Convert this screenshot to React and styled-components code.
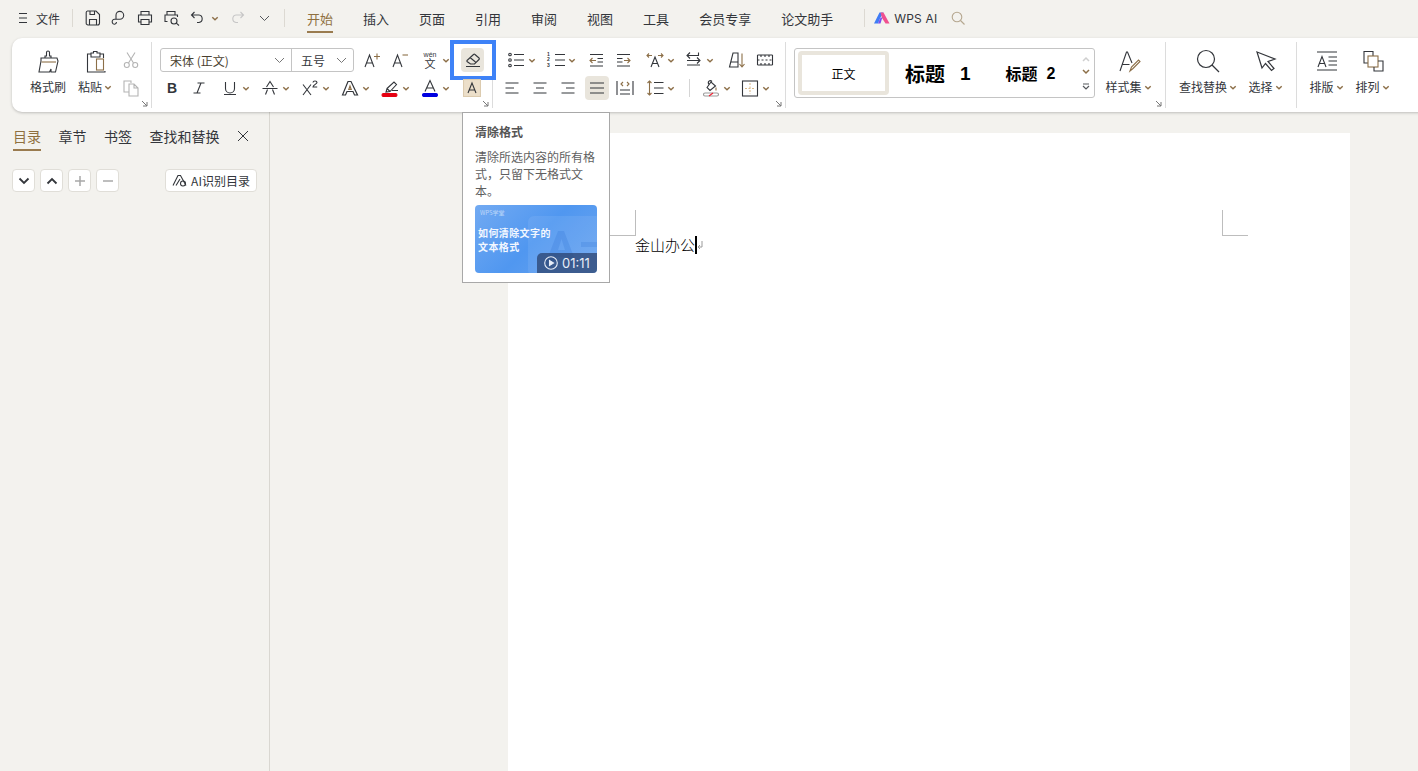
import React from 'react';
import styled, { createGlobalStyle } from 'styled-components';

const D = '#33363b';
const B = '#8c6f48';
const G = '#b4b4b4';
const CJK = '"Noto Sans CJK SC", "Liberation Sans", sans-serif';

const Global = createGlobalStyle`
  html, body { margin: 0; padding: 0; height: 771px; overflow: hidden; background: #f3f2ee; }
  body { font-family: "Inter", "Noto Sans CJK SC", "Liberation Sans", sans-serif; color: #33363b; }
  #root { height: 771px; }
`;

const App_ = styled.div`height: 771px; display: flex; flex-direction: column; position: relative; overflow: hidden;`;

const TopBar = styled.header`height: 36px; padding-bottom: 2px; flex: none; display: flex; align-items: center; padding-left: 18px;`;
const TopLabel = styled.span`font: 12px ${CJK}; margin-left: ${p => p.$ml || 0}px;`;
const TopSep = styled.i`width: 1px; height: 18px; background: #dcd9d2; margin-left: ${p => p.$ml || 0}px; flex: none;`;
const TopIcon = styled.span`display: flex; margin-left: ${p => p.$ml || 0}px; flex: none;`;
const Tabs = styled.nav`display: flex; gap: 30px; margin-left: 22px; align-self: flex-start;`;
const Tab = styled.a`
  height: 22px; margin-top: 9px; font: 13px/20px ${CJK};
  color: ${p => (p.$active ? '#8f7040' : '#33363b')};
  border-bottom: 2px solid ${p => (p.$active ? '#9a7b4f' : 'transparent')};
`;
const AiLabel = styled.span`font: 12px "Inter", sans-serif; letter-spacing: .2px; color: #33363b; margin-left: 4px;`;

const Ribbon = styled.section`
  height: 74px; flex: none; margin-left: 12px; margin-right: -20px; background: #fff;
  border-radius: 10px; box-shadow: 0 1px 3px rgba(0,0,0,.22); display: flex; position: relative; z-index: 1;
`;
const Group = styled.div`
  width: ${p => p.$w}px; flex: ${p => (p.$w ? 'none' : 1)}; box-sizing: border-box; margin: 4px 0; padding: 6px 0 0 ${p => p.$pl}px;
  border-right: ${p => (p.$last ? '0' : '1px solid #dcdcdc')}; display: flex; position: relative;
`;
const Launcher = styled.span`position: absolute; right: 3px; bottom: 1px; display: flex;`;
const Big = styled.div`display: flex; flex-direction: column; align-items: center; width: ${p => p.$w}px; margin-left: ${p => p.$ml || 0}px; flex: none;`;
const BigIcon = styled.div`height: 26px; display: flex; align-items: center; justify-content: center;`;
const BigLabel = styled.div`margin-top: 5px; font: 12px/16px ${CJK}; color: #33363b; display: flex; align-items: center; gap: 2px; white-space: nowrap;`;
const Stack = styled.div`display: flex; flex-direction: column; gap: 4px; margin-left: ${p => p.$ml || 0}px;`;
const Row = styled.div`display: flex; align-items: center; height: 24px; margin-left: ${p => p.$ml || 0}px;`;
const Tool = styled.span`
  display: flex; align-items: center; justify-content: center; gap: 3px; flex: none; height: 24px;
  width: ${p => (p.$w ? p.$w + 'px' : 'auto')}; margin-left: ${p => p.$ml || 0}px; border-radius: 4px;
  background: ${p => (p.$on ? '#e9e5dc' : 'transparent')}; position: relative;
`;
const Highlight = styled.span`position: absolute; left: -11px; top: -8px; width: 38px; height: 32px; border: 4px solid #3e82f7; pointer-events: none;`;
const RowSep = styled.i`width: 1px; height: 18px; background: #d5d5d5; margin-left: ${p => p.$ml}px; flex: none;`;
const Combo = styled.div`width: 194px; height: 24px; box-sizing: border-box; border: 1px solid #c4c4c4; border-radius: 3px; display: flex; flex: none;`;
const ComboCell = styled.div`
  width: ${p => p.$w}px; box-sizing: border-box; padding: 0 6px 0 ${p => p.$pl}px; display: flex; align-items: center; justify-content: space-between;
  font: 12px ${CJK}; color: ${p => p.$c || '#33363b'}; border-left: ${p => (p.$sep ? '1px solid #c4c4c4' : 0)}; flex: none;
`;
const Bold = styled.span`font: bold 14px "Liberation Sans", sans-serif; color: #33363b; width: 14px; text-align: center;`;
const Pinyin = styled.span`width: 18px; display: flex; flex-direction: column; align-items: center; color: #33363b;`;
const PinyinTop = styled.span`font: 7px/7px "Liberation Sans", sans-serif; height: 7px;`;
const PinyinBottom = styled.span`font: 11px/11px ${CJK}; height: 11px;`;
const ListNums = styled.span`width: 7px; display: flex; flex-direction: column; font: bold 5px/5.5px "Liberation Sans", sans-serif; color: #33363b;`;
const NumList = styled.span`display: flex; align-items: center; width: 18px; gap: 1px;`;

const Gallery = styled.div`width: 301px; height: 50px; box-sizing: border-box; border: 1px solid #c4c4c4; border-radius: 3px; display: flex; align-items: center; padding-left: 3px; flex: none;`;
const NormalStyle = styled.div`width: 91px; height: 44px; box-sizing: border-box; border: 4px solid #e9e5dc; border-radius: 4px; display: flex; align-items: center; justify-content: center; font: 12px ${CJK}; color: #000; flex: none;`;
const Heading = styled.div`font: bold ${p => p.$s}px ${CJK}; color: #000; margin-left: ${p => p.$ml}px; display: flex; align-items: center; flex: none;`;
const HNum = styled.span`font: bold ${p => p.$s}px "Liberation Sans", sans-serif; margin: 1px 0 0 ${p => p.$ml}px;`;
const GalleryScroll = styled.div`margin-left: auto; width: 16px; height: 100%; display: flex; flex-direction: column; align-items: center; justify-content: space-around; padding: 3px 0; box-sizing: border-box;`;

const Body = styled.main`flex: 1; display: flex; min-height: 0;`;
const Side = styled.aside`width: 270px; box-sizing: border-box; border-right: 1px solid #d9d7d1; padding: 15px 0 0 13px; flex: none;`;
const SideTabs = styled.div`display: flex; gap: 17.5px; align-items: flex-start; height: 23px;`;
const SideTab = styled.span`
  font: 14px/18px ${CJK}; white-space: nowrap; padding-bottom: 4px; color: ${p => (p.$active ? '#8f7040' : '#33363b')};
  border-bottom: ${p => (p.$active ? '2px solid #9a7b4f' : '0')};
`;
const SideClose = styled.span`display: flex; margin: 2px 0 0 -1px;`;
const SideTools = styled.div`display: flex; margin: 19px 0 0 -1px; gap: 5px; align-items: center; width: 245px;`;
const SquareBtn = styled.button`
  width: 23px; height: 23px; padding: 0; background: #fff; border: 1px solid #e0ded8; border-radius: 4px; display: flex; align-items: center; justify-content: center;
`;
const AiBtn = styled.button`
  margin-left: auto; height: 23px; width: 92px; padding: 0; background: #fff; border: 1px solid #e0ded8; border-radius: 4px; display: flex; align-items: center; justify-content: center; gap: 4px;
  font: 12px ${CJK}; color: #33363b; white-space: nowrap;
`;
const DocArea = styled.div`flex: 1; padding: 21px 0 0 238px; overflow: hidden;`;
const Page = styled.article`width: 842px; height: 700px; background: #fff; position: relative; box-sizing: border-box; padding: 102px 0 0 127px;`;
const Crop = styled.i`
  position: absolute; top: 77px; width: 26px; height: 26px; box-sizing: border-box; border-bottom: 1px solid #bdbdbd;
  ${p => (p.$right ? 'left: 714px; border-left: 1px solid #bdbdbd;' : 'left: 102px; border-right: 1px solid #bdbdbd;')}
`;
const Line = styled.p`margin: 0; display: flex; align-items: center; height: 20px; font: 300 15px/20px ${CJK}; color: #000;`;
const Caret = styled.i`width: 2px; height: 18px; background: #000;`;
const ParaMark = styled.span`display: flex;`;

const Tip = styled.aside`
  position: absolute; left: 462px; top: 112px; width: 148px; height: 171px; box-sizing: border-box; background: #fff; border: 1px solid #a8a8a8; padding: 10px 12px 0; z-index: 2;
`;
const TipTitle = styled.div`font: bold 12px/17px ${CJK}; color: #555;`;
const TipText = styled.div`margin-top: 8px; font: 12px/17px ${CJK}; color: #5f5f5f;`;
const Thumb = styled.div`
  margin-top: 6px; width: 122px; height: 68px; border-radius: 4px; position: relative; overflow: hidden;
  background: linear-gradient(135deg, #72aaf2 0%, #5097f0 50%, #6ba5ef 100%); color: #fff;
`;
const ThumbBrand = styled.div`position: absolute; left: 5px; top: 4px; font: 6px/8px ${CJK}; color: rgba(255,255,255,.55);`;
const ThumbTitle = styled.div`position: absolute; left: 3px; top: 21px; font: bold 10px/13.5px ${CJK}; letter-spacing: .4px; color: #f2f7ff; white-space: nowrap;`;
const ThumbArt = styled.svg`position: absolute; left: 0; top: 0;`;
const Pill = styled.div`
  position: absolute; right: 0; bottom: 0; width: 60px; height: 20px; background: rgba(40,62,105,.72); border-radius: 5px 0 0 0; display: flex; align-items: center; justify-content: center; gap: 4px;
  font: 13px "Inter", sans-serif; color: #e8eef8;
`;

const SvgBase = styled.svg`fill: none; stroke: ${p => p.$c || D}; stroke-width: ${p => p.$sw || 1.1}; flex: none; display: block;`;
const I = ({ s = 18, w, h, c, sw, children }) => (
  <SvgBase width={w || s} height={h || s} viewBox={`0 0 ${w || s} ${h || s}`} $c={c} $sw={sw}>{children}</SvgBase>
);
const Car = () => <I w={8} h={5} c={B} sw={1.4}><path d="M1.300 1.200L4 3.800l2.700-2.600" /></I>;
const Chev = ({ c = '#777' }) => <I w={11} h={7} c={c} sw={1}><path d="M1 1l4.500 4.500L10 1" /></I>;
const Launch = () => <I s={7} c="#777" sw={1}><path d="M1 1l5 5M6 2v4H2" /></I>;

const App = () => (
  <App_>
    <Global />
    <TopBar>
      <I w={10} h={12}><path d="M1 1.500h8M1 6h8M1 10.500h8" /></I>
      <TopLabel $ml={8}>文件</TopLabel>
      <TopSep $ml={12} />
      <TopIcon $ml={12}><I s={16}><path d="M2.500 1H11l3.500 3.500V13a2 2 0 0 1-2 2h-9.500a1.800 1.800 0 0 1-1.800-1.800V2.500A1.500 1.500 0 0 1 2.500 1zM5 1v3.500h4.500V1M4.500 15V9.500h7V15" /></I></TopIcon>
      <TopIcon $ml={9}><I s={16}><path d="M6 9V5.200a3.800 3.800 0 0 1 3.800-3.800 3.800 3.800 0 0 1 0 7.800H4.500a2.400 2.400 0 0 0-2.300 2.600 2.400 2.400 0 0 0 2.500 2.400A2.200 2.200 0 0 0 6.500 12" /></I></TopIcon>
      <TopIcon $ml={11}><I s={16}><path d="M4 5V1.500h8V5M4 12H1.500V5h13v7H12M4 9.500h8V14.500H4z" /></I></TopIcon>
      <TopIcon $ml={11}><I s={16}><path d="M3 5V1.500h8V5M3.500 11.500H1V5h12.500v2" /><circle cx="10" cy="11" r="3" /><path d="M12.300 13.200L15 15.500" /></I></TopIcon>
      <TopIcon $ml={10}><I w={14} h={16}><path d="M4.500 2L1.500 5l3 3M1.500 5H9a3.800 3.800 0 0 1 0 7.500H7" /></I></TopIcon>
      <TopIcon $ml={7}><Car /></TopIcon>
      <TopIcon $ml={12}><I w={14} h={16} c="#c6c6c6"><path d="M9.500 2l3 3-3 3M12.500 5H5a3.800 3.800 0 0 0 0 7.500h2" /></I></TopIcon>
      <TopIcon $ml={14}><Chev c="#55585c" /></TopIcon>
      <TopSep $ml={14} />
      <Tabs>
        <Tab $active>开始</Tab>
        <Tab>插入</Tab>
        <Tab>页面</Tab>
        <Tab>引用</Tab>
        <Tab>审阅</Tab>
        <Tab>视图</Tab>
        <Tab>工具</Tab>
        <Tab>会员专享</Tab>
        <Tab>论文助手</Tab>
      </Tabs>
      <TopSep $ml={31} />
      <TopIcon $ml={9}>
        <svg width="16" height="12" viewBox="0 0 16 12">
          <path d="M0 11.500L5.500 0.500H9.500L6 6.500 4 11.500z" fill="#3f7cf5" />
          <path d="M6.500 0.500h3l6 11h-4L8 6z" fill="#f0508f" />
          <path d="M4 11.500L6 6.500l2.500-1.500L6.500 11.500z" fill="#7a4ff0" />
        </svg>
      </TopIcon>
      <AiLabel>WPS AI</AiLabel>
      <TopIcon $ml={14}><I s={14} c="#b5a78f"><circle cx="6" cy="6" r="4.800" /><path d="M9.500 9.500L13.500 13.500" /></I></TopIcon>
    </TopBar>

    <Ribbon>
      <Group $w={140} $pl={18}>
        <Big $w={36}>
          <BigIcon>
            <I w={22} h={24}>
              <path d="M8 9V7h1.500V3.500a1.500 1.500 0 0 1 3 0V7H14v2" />
              <path d="M4 9h16l1 3-2.500 11H14v-3l-1.500 3H2L4 12z" />
              <path d="M4.500 13h14.500" stroke={B} />
            </I>
          </BigIcon>
          <BigLabel>格式刷</BigLabel>
        </Big>
        <Big $w={34} $ml={12}>
          <BigIcon>
            <I w={22} h={24}>
              <path d="M7 5H3.500V23H21V22M16 5h3.500V9M7 4h2.500V2.500H13V4h3v4H7z" />
              <rect x="12.500" y="10" width="7" height="11" stroke={B} />
            </I>
          </BigIcon>
          <BigLabel>粘贴<Car /></BigLabel>
        </Big>
        <Stack $ml={10}>
          <Row><Tool $w={18}><I s={18} c={G}><path d="M5 1.500l6.500 10.500M13 1.500L6.500 12" /><circle cx="4.800" cy="14" r="2.500" /><circle cx="13.200" cy="14" r="2.500" /></I></Tool></Row>
          <Row><Tool $w={18}><I s={18} c={G}><path d="M7 13H2V2h7v2M7 5h5l4 4v8H7zM12 5v4h4" /></I></Tool></Row>
        </Stack>
        <Launcher><Launch /></Launcher>
      </Group>

      <Group $w={341} $pl={8}>
        <Stack>
          <Row>
            <Combo>
              <ComboCell $w={130} $pl={9} $c="#4a3f30">宋体 (正文)<Chev /></ComboCell>
              <ComboCell $w={62} $pl={9} $sep>五号<Chev /></ComboCell>
            </Combo>
            <Tool $ml={9}><I s={18}><path d="M2 16L6.500 4 11 16M3.500 12h6" /><path d="M11 5.500h6M14 2.500v6" stroke={B} /></I></Tool>
            <Tool $ml={10}><I s={18}><path d="M2 16L6.500 4 11 16M3.500 12h6" /><path d="M11.500 4h5.500" stroke={B} /></I></Tool>
            <Tool $ml={12}>
              <Pinyin><PinyinTop>wén</PinyinTop><PinyinBottom>文</PinyinBottom></Pinyin>
              <Car />
            </Tool>
            <Tool $ml={11} $w={23} $on>
              <I s={18}><path d="M3 9.500L9.500 3.500a1 1 0 0 1 1.500 0l4 3.500a1 1 0 0 1 0 1.500L10.500 13H6.500L3 10.500a.8.8 0 0 1 0-1zM6 6.500l5.500 4.500M2 15.500h14" /></I>
              <Highlight />
            </Tool>
          </Row>
          <Row>
            <Tool $w={24}><Bold>B</Bold></Tool>
            <Tool $w={24} $ml={3}><I s={16}><path d="M6.500 3h7M2.500 13h7M10 3L6 13" /></I></Tool>
            <Tool $ml={10}><I s={18}><path d="M4.500 3v6.500a4.500 4.500 0 0 0 9 0V3M3 15.500h12" /></I><Car /></Tool>
            <Tool $ml={11}><I s={18}><path d="M5.500 8L9 2.500 12.500 8M1.500 9.500h15M6.500 10.500L4.500 15.500M11.500 10.500l2 5" /></I><Car /></Tool>
            <Tool $ml={11}><I s={18}><path d="M2 5.500l8 10.500M10 5.500L2 16" /><path d="M12 3.500c0-2 4-2 4 0 0 1.500-4 2.500-4 4.500h4.200" /></I><Car /></Tool>
            <Tool $ml={11}><I s={18} sw={1.200}><path d="M1.500 16L7 2.500h3L16.500 16h-3l-1.500-3.500H6L4.500 16z" /><path d="M7.800 10.500L9 7l1.200 3.500z" stroke={B} /></I><Car /></Tool>
            <Tool $ml={11}>
              <I s={18}><path d="M6 9.500L9 12.500M6 9.500L13 3l2.500 2.500L9 12.500 5 13zM11 11.500h6" /><rect x="1" y="14.500" width="15" height="3" rx="1.500" fill="#e60012" stroke="#e60012" /></I>
              <Car />
            </Tool>
            <Tool $ml={11}>
              <I s={18}><path d="M4 12.500L9 1.500l5 11M5.500 9h7" /><rect x="1.500" y="14.500" width="15" height="3" rx="1.500" fill="#0000e0" stroke="#0000e0" /></I>
              <Car />
            </Tool>
            <Tool $ml={13}><I s={18}><rect x=".5" y=".5" width="17" height="17" fill="#ecdfca" stroke="#dccbaf" /><path d="M5 14L9 4l4 10M6.200 11h5.600" /></I></Tool>
          </Row>
        </Stack>
        <Launcher><Launch /></Launcher>
      </Group>

      <Group $w={293} $pl={10}>
        <Stack>
          <Row $ml={4}>
            <Tool><I s={18}><circle cx="3" cy="3.500" r="1.300" /><circle cx="3" cy="9" r="1.300" /><circle cx="3" cy="14.500" r="1.300" /><path d="M7 3.500h10M7 9h10M7 14.500h10" /></I><Car /></Tool>
            <Tool $ml={11}>
              <NumList>
                <ListNums><span>1</span><span>2</span><span>3</span></ListNums>
                <I w={10} h={18}><path d="M0 3.500h10M0 9h10M0 14.500h10" /></I>
              </NumList>
              <Car />
            </Tool>
            <Tool $ml={11}><I s={18}><path d="M3 3.500h13M10.500 7.500h5.500M10.500 11h5.500M3 15h13" /><path d="M9 9.500H3M5.500 7L3 9.500 5.500 12" stroke={B} /></I></Tool>
            <Tool $ml={10}><I s={18}><path d="M2 3.500h13M2 7.500h5.500M2 11h5.500M2 15h13" /><path d="M9 9.500h6M12.500 7l2.500 2.500L12.500 12" stroke={B} /></I></Tool>
            <Tool $ml={13}>
              <I s={18}><path d="M5 16L9 6l4 10M6.500 12.500h5" /><path d="M1 4.500h5M3 2.500L1 4.500l2 2M12 4.500h5M15 2.500l2 2-2 2" stroke={B} /></I>
              <Car />
            </Tool>
            <Tool $ml={10}><I s={18}><path d="M2 4.500h11.500V1.500M5 1.500L2 4.500l3 3M2 9.500h13M2 14h13M12 6.500l3 3-3 3" /></I><Car /></Tool>
            <Tool $ml={14}><I s={18}><path d="M1.500 16L5 2h5v14H1.500zM3 11h7" /><path d="M14 2.500V15.500M11.500 13l2.500 3 2.500-3" stroke={B} /></I></Tool>
            <Tool $ml={10}><I s={18}><path d="M1.500 4h15M1.500 14h15M1.500 4v10M16.500 4v10" /><path d="M5 4v2M9 4v2M13 4v2M5 12v2M9 12v2M13 12v2M1.500 9h15" strokeDasharray="2 2" /></I></Tool>
          </Row>
          <Row>
            <Tool><I s={18}><path d="M2.500 4h13M2.500 9h8.500M2.500 14h13" /></I></Tool>
            <Tool $ml={10}><I s={18}><path d="M2.500 4h13M5 9h8M2.500 14h13" /></I></Tool>
            <Tool $ml={10}><I s={18}><path d="M2.500 4h13M7 9h8.500M2.500 14h13" /></I></Tool>
            <Tool $w={24} $ml={8} $on><I s={18} sw={1.200}><path d="M2 4h14M2 9h14M2 14h14" /></I></Tool>
            <Tool $ml={7}><I s={18}><path d="M1 2v14M17 2v14M4 11h10M4 15h10" /><path d="M7 3L5 5l2 2M11 3l2 2-2 2" stroke={B} /></I></Tool>
            <Tool $ml={12}><I s={18}><path d="M8 3.500h9.500M8 9h9.500M8 14.500h9.500" /><path d="M3.500 2v14M1.500 4l2-2 2 2M1.500 14l2 2 2-2" stroke={B} /></I><Car /></Tool>
            <RowSep $ml={14} />
            <Tool $ml={12}><I s={18}><path d="M5 8.500L9 3l4.500 4L8 11.500zM7 5.500c-2-3 1-5 3-3" /><path d="M14 8.500v3" stroke={B} /><rect x="1.500" y="14" width="15" height="3" rx="1.500" stroke="#999" /><path d="M7 17l4-3" stroke="#e23" /></I><Car /></Tool>
            <Tool $ml={10}><I s={18}><rect x="1.500" y="2" width="15" height="15" /><path d="M9 4v11M4 9.500h10" stroke="#d9b98a" strokeDasharray="2 1.500" /></I><Car /></Tool>
          </Row>
        </Stack>
        <Launcher><Launch /></Launcher>
      </Group>

      <Group $w={380} $pl={8}>
        <Gallery>
          <NormalStyle>正文</NormalStyle>
          <Heading $s={20} $ml={16}>标题<HNum $s={19} $ml={15}>1</HNum></Heading>
          <Heading $s={16} $ml={35}>标题<HNum $s={16} $ml={9}>2</HNum></Heading>
          <GalleryScroll>
            <I w={8} h={6} c="#cfcfcf" sw={1.500}><path d="M1 5l3-3 3 3" /></I>
            <I w={8} h={6} c={B} sw={1.500}><path d="M1 1l3 3 3-3" /></I>
            <I w={8} h={7} c="#55585c" sw={1.200}><path d="M1 1h6M1 3l3 3 3-3" /></I>
          </GalleryScroll>
        </Gallery>
        <Big $w={45} $ml={11}>
          <BigIcon>
            <I w={24} h={24}><path d="M3 22L9.500 3h1L15 14M5.500 15.500h7" /><path d="M13 22l1.500-4 7-7 1.500 1.500-7 7z" stroke={B} /></I>
          </BigIcon>
          <BigLabel>样式集<Car /></BigLabel>
        </Big>
        <Launcher><Launch /></Launcher>
      </Group>

      <Group $w={131} $pl={13}>
        <Big $w={58}>
          <BigIcon><I s={24} sw={1.200}><circle cx="10" cy="10" r="8.500" /><path d="M16 16l7 7" /></I></BigIcon>
          <BigLabel>查找替换<Car /></BigLabel>
        </Big>
        <Big $w={35} $ml={11}>
          <BigIcon><I s={22} sw={1.200}><path d="M2 2l18 7-7 2.500 6 7-2.500 2-6-7L7 18z" /></I></BigIcon>
          <BigLabel>选择<Car /></BigLabel>
        </Big>
      </Group>

      <Group $pl={13} $last>
        <Big $w={33}>
          <BigIcon><I s={22}><path d="M1 2h20M1 20h20M12.500 7H21M12.500 11H21M12.500 15H21" /><path d="M2 17L6 6.500 10 17M3.500 13.500h5" /></I></BigIcon>
          <BigLabel>排版<Car /></BigLabel>
        </Big>
        <Big $w={33} $ml={13}>
          <BigIcon><I s={22}><path d="M11 6V1.500H2V13h4" /><rect x="6" y="6" width="10" height="11" stroke={B} /><path d="M12 17v4h9V11h-5" /></I></BigIcon>
          <BigLabel>排列<Car /></BigLabel>
        </Big>
      </Group>
    </Ribbon>

    <Body>
      <Side>
        <SideTabs>
          <SideTab $active>目录</SideTab>
          <SideTab>章节</SideTab>
          <SideTab>书签</SideTab>
          <SideTab>查找和替换</SideTab>
          <SideClose><I s={14} sw={1}><path d="M2 2l10 10M12 2L2 12" /></I></SideClose>
        </SideTabs>
        <SideTools>
          <SquareBtn><I w={12} h={8} sw={1.800}><path d="M1.500 1.500L6 6l4.500-4.500" /></I></SquareBtn>
          <SquareBtn><I w={12} h={8} sw={1.800}><path d="M1.500 6.500L6 2l4.500 4.500" /></I></SquareBtn>
          <SquareBtn><I s={12} c="#a8a8a8" sw={1.500}><path d="M1 6h10M6 1v10" /></I></SquareBtn>
          <SquareBtn><I s={12} c="#a8a8a8" sw={1.500}><path d="M1 6h10" /></I></SquareBtn>
          <AiBtn>
            <I w={15} h={13}><path d="M1 11.500L6 1.500h2.500l5.500 10M4 11.500l4-6.500" /><circle cx="11" cy="9.500" r="2.500" /></I>
            AI识别目录
          </AiBtn>
        </SideTools>
      </Side>
      <DocArea>
        <Page>
          <Crop />
          <Crop $right />
          <Line>
            金山办公
            <Caret />
            <ParaMark><I w={6} h={10} c="#9a9a9a" sw={1}><path d="M5 1v6H1M3 5L1 7l2 2" /></I></ParaMark>
          </Line>
        </Page>
      </DocArea>
    </Body>

    <Tip>
      <TipTitle>清除格式</TipTitle>
      <TipText>清除所选内容的所有格式，只留下无格式文本。</TipText>
      <Thumb>
        <ThumbArt width="122" height="68" viewBox="0 0 122 68">
          <rect x="53" y="11" width="80" height="60" rx="6" fill="#fff" fillOpacity=".08" />
          <path d="M70 60L83 26h6l13 34h-8l-2.500-8H80.500L78 60zM83 45h7l-3.500-11z" fill="#2a6ed2" fillOpacity=".22" />
          <rect x="106" y="37" width="16" height="5" fill="#2a6ed2" fillOpacity=".2" />
        </ThumbArt>
        <ThumbBrand>WPS学堂</ThumbBrand>
        <ThumbTitle>如何清除文字的<br />文本格式</ThumbTitle>
        <Pill>
          <I s={14} c="#e8eef8" sw={1.100}><circle cx="7" cy="7" r="6.300" /><path d="M5.500 4.500v5l4-2.500z" fill="#e8eef8" /></I>
          01:11
        </Pill>
      </Thumb>
    </Tip>
  </App_>
);

export default App;
